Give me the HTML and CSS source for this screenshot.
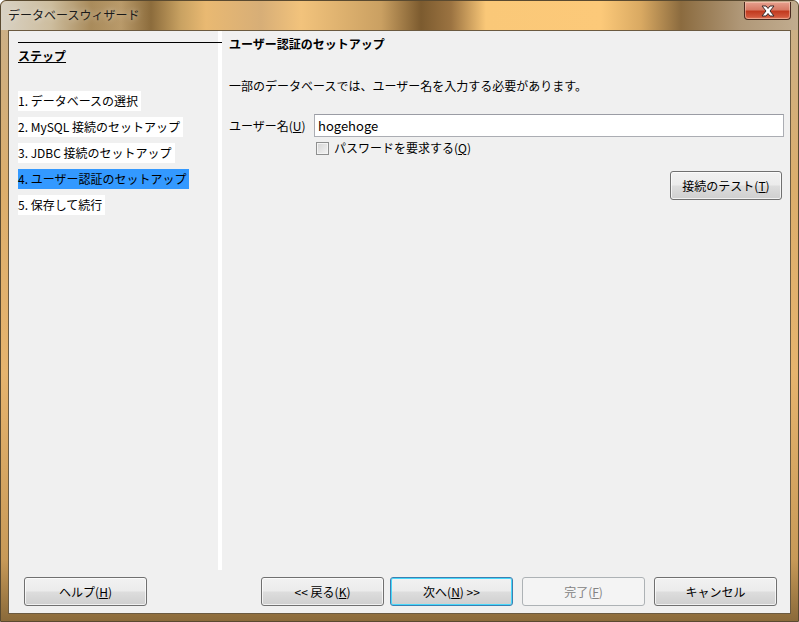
FILE: index.html
```html
<!DOCTYPE html>
<html lang="ja">
<head>
    <meta charset="UTF-8">
    <meta name="viewport" content="width=device-width, initial-scale=1.0">
    <title>データベースウィザード</title>
    <link rel="stylesheet" href="styles.css">
</head>
<body>
    <div class="window">
        <div class="titlebar">
            <span class="title">データベースウィザード</span>
            <div class="close-btn">
                <svg width="16" height="12" viewBox="0 0 16 12">
                    <path d="M2 1 L6 1 L8 3.5 L10 1 L14 1 L10 6 L14 11 L10 11 L8 8.5 L6 11 L2 11 L6 6 Z" fill="#fff" stroke="#3a2a2a" stroke-width="1" stroke-linejoin="round"/>
                </svg>
            </div>
        </div>

        <div class="client">
            <div class="main">
                <!-- ステップ一覧 -->
                <div class="steps">
                    <div class="steps-line"></div>
                    <div class="steps-title">ステップ</div>
                    <ul class="step-list">
                        <li><span>1. データベースの選択</span></li>
                        <li><span>2. MySQL 接続のセットアップ</span></li>
                        <li><span>3. JDBC 接続のセットアップ</span></li>
                        <li class="current"><span>4. ユーザー認証のセットアップ</span></li>
                        <li><span>5. 保存して続行</span></li>
                    </ul>
                </div>

                <!-- 入力パネル -->
                <div class="panel">
                    <div class="panel-title">ユーザー認証のセットアップ</div>
                    <p class="panel-desc">一部のデータベースでは、ユーザー名を入力する必要があります。</p>
                    <div class="form-grid">
                        <label class="field-label" for="user">ユーザー名(<u>U</u>)</label>
                        <input class="text-field" type="text" id="user" value="hogehoge">
                        <label class="check-row">
                            <span class="checkbox"></span>
                            <span>パスワードを要求する(<u>Q</u>)</span>
                        </label>
                    </div>
                    <div class="test-row">
                        <button class="btn test-btn">接続のテスト(<u>T</u>)</button>
                    </div>
                </div>
            </div>

            <div class="button-bar">
                <button class="btn">ヘルプ(<u>H</u>)</button>
                <div class="nav-buttons">
                    <button class="btn">&lt;&lt; 戻る(<u>K</u>)</button>
                    <button class="btn focused">次へ(<u>N</u>) &gt;&gt;</button>
                    <button class="btn disabled">完了(<u>F</u>)</button>
                    <button class="btn">キャンセル</button>
                </div>
            </div>
        </div>
    </div>
</body>
</html>
```

FILE: styles.css
```css
html, body {
    margin: 0;
    padding: 0;
}
body {
    width: 799px;
    height: 622px;
    overflow: hidden;
    font-family: "Noto Sans CJK JP", sans-serif;
    font-size: 12px;
    color: #000;
}
.window {
    width: 799px;
    height: 622px;
    box-sizing: border-box;
    display: flex;
    flex-direction: column;
    background: linear-gradient(180deg, #c9b08a 0%, #dcae6c 30%, #e6b46e 60%, #c89a58 90%, #8a6a3a 100%);
    border: 1px solid #5a4a30;
    border-radius: 6px 6px 0 0;
}
.titlebar {
    height: 29px;
    flex-shrink: 0;
    display: flex;
    justify-content: space-between;
    align-items: flex-start;
    background: linear-gradient(90deg, #d9d2c4 0px, #cdbd9e 50px, #a98b5b 90px, #b99a6a 120px, #8c6c3c 150px, #c9a262 180px, #e9b972 205px, #d7ae77 260px, #f2c37c 300px, #caa062 380px, #7c5b2f 420px, #9b7341 450px, #fac878 485px, #fcc979 600px, #d9a962 640px, #8b6b3f 680px, #b09878 740px, #c2ad90 799px);
    border-radius: 6px 6px 0 0;
}
.title {
    padding: 6px 0 0 7px;
    line-height: 16px;
    color: #1a1a1a;
    text-shadow: 0 0 6px rgba(255, 255, 255, 0.7);
}
.close-btn {
    width: 45px;
    height: 17px;
    margin: 1px 7px 0 0;
    display: flex;
    justify-content: center;
    align-items: center;
    border: 1px solid #4a2a20;
    border-top: none;
    border-radius: 0 0 4px 4px;
    background: linear-gradient(180deg, #e6a08e 0%, #d77b66 45%, #c13a1f 55%, #d0553a 85%, #e07a5c 100%);
    box-shadow: inset 0 0 0 1px rgba(255, 220, 200, 0.45);
}
.client {
    flex: 1;
    margin: 0 7px 7px 7px;
    background: #f0f0f0;
    border: 1px solid #6b5a40;
    display: flex;
    flex-direction: column;
}
.main {
    height: 539px;
    display: flex;
}
.steps {
    width: 200px;
    padding-left: 9px;
    border-right: 4px solid #fff;
}
.steps-line {
    margin: 11px -4px 0 0;
    border-top: 1px solid #000;
}
.steps-title {
    margin-top: 5px;
    line-height: 16px;
    font-weight: bold;
    text-decoration: underline;
}
.step-list {
    list-style: none;
    margin: 27px 0 0;
    padding: 0;
    display: flex;
    flex-direction: column;
    align-items: flex-start;
    gap: 6px;
}
.step-list span {
    display: block;
    height: 20px;
    line-height: 20px;
    padding-right: 3px;
    background: #fff;
}
.step-list .current span {
    background: #3399ff;
}
.panel {
    flex: 1;
    padding: 5px 6px 0 7px;
}
.panel-title {
    line-height: 16px;
    font-weight: bold;
}
.panel-desc {
    margin: 26px 0 0;
    line-height: 16px;
}
.form-grid {
    margin-top: 20px;
    display: grid;
    grid-template-columns: 79px 1fr;
    column-gap: 6px;
    row-gap: 3px;
    align-items: center;
}
.field-label {
    line-height: 16px;
}
.text-field {
    height: 23px;
    box-sizing: border-box;
    margin: 0;
    padding: 0 3px;
    border: 1px solid #abadb3;
    border-top-color: #9a9ca4;
    background: #fff;
    font-family: "Noto Sans CJK JP", sans-serif;
    font-size: 13px;
    color: #000;
    outline: none;
}
.check-row {
    grid-column: 2;
    padding-left: 2px;
    display: flex;
    align-items: center;
    gap: 5px;
    line-height: 16px;
}
.checkbox {
    width: 11px;
    height: 11px;
    border: 1px solid #8e8f8f;
    background: linear-gradient(135deg, #d4d4d4 0%, #f4f4f4 100%);
    box-shadow: inset 0 0 0 1px #f4f4f4;
}
.test-row {
    margin-top: 15px;
    padding-right: 2px;
    display: flex;
    justify-content: flex-end;
}
.btn {
    height: 29px;
    box-sizing: border-box;
    margin: 0;
    padding: 0 8px;
    border: 1px solid #707070;
    border-radius: 3px;
    background: linear-gradient(180deg, #f2f2f2 0%, #ebebeb 48%, #dddddd 52%, #cfcfcf 100%);
    box-shadow: inset 0 0 0 1px rgba(255, 255, 255, 0.7);
    font-family: "Noto Sans CJK JP", sans-serif;
    font-size: 12px;
    color: #000;
    width: 123px;
}
.test-btn {
    width: 112px;
}
.btn.focused {
    border-color: #3c7fb1;
    box-shadow: inset 0 0 0 1px #48d8fb;
}
.btn.disabled {
    border-color: #adb2b5;
    background: #f4f4f4;
    box-shadow: none;
    color: #838383;
}
.button-bar {
    flex: 1;
    display: flex;
    justify-content: space-between;
    align-items: flex-start;
    padding: 7px 13px 0 15px;
}
.nav-buttons {
    display: flex;
    gap: 9px;
}
.nav-buttons .btn:first-child {
    margin-right: -3px;
}
```
